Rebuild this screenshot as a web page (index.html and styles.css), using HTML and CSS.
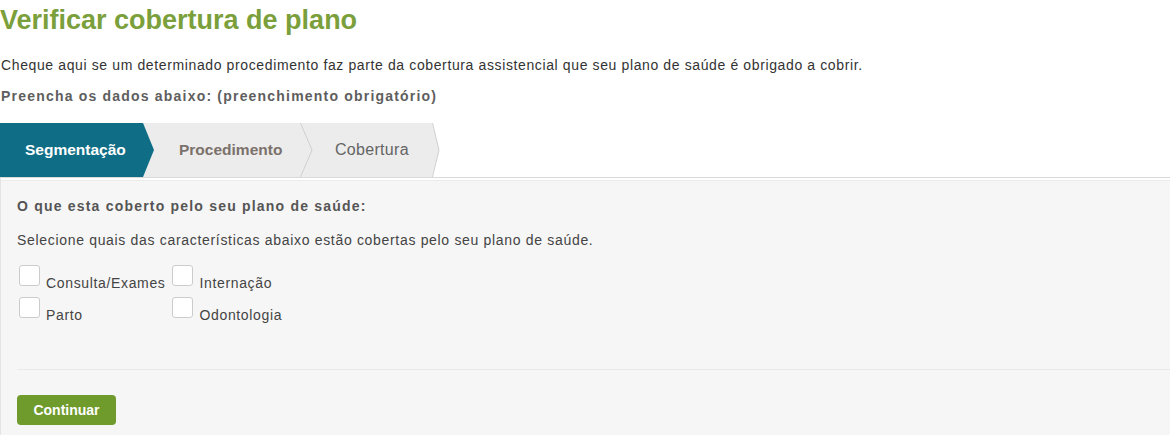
FILE: index.html
```html
<!DOCTYPE html>
<html lang="pt-BR">
<head>
<meta charset="utf-8">
<title>Verificar cobertura de plano</title>
<link rel="stylesheet" href="styles.css">
</head>
<body>
<main class="page">
  <h1 class="title">Verificar cobertura de plano</h1>
  <p class="intro">Cheque aqui se um determinado procedimento faz parte da cobertura assistencial que seu plano de saúde é obrigado a cobrir.</p>
  <p class="required">Preencha os dados abaixo: (preenchimento obrigatório)</p>

  <nav class="steps">
    <div class="step step-active">
      <span>Segmentação</span>
      <svg class="chev" viewBox="0 0 11 54" preserveAspectRatio="none"><path d="M0 0 L11 27 L0 54 Z" fill="#0f6e86"/></svg>
    </div>
    <div class="step step-two">
      <span>Procedimento</span>
      <svg class="chev chev-gray" viewBox="0 0 13 54" preserveAspectRatio="none"><path d="M0 0 L12 27 L0 54 Z" fill="#ececec"/><path d="M0.5 0 L12 27 L0.5 54" fill="none" stroke="#cfcfcf" stroke-width="1"/></svg>
    </div>
    <div class="step step-three">
      <span>Cobertura</span>
      <svg class="chev chev-gray chev-small" viewBox="0 0 8 54" preserveAspectRatio="none"><path d="M0 0 L7 27 L0 54 Z" fill="#ececec"/><path d="M0.5 0 L7 27 L0.5 54" fill="none" stroke="#cfcfcf" stroke-width="1"/></svg>
    </div>
  </nav>

  <section class="panel">
    <h2 class="panel-title">O que esta coberto pelo seu plano de saúde:</h2>
    <p class="panel-text">Selecione quais das características abaixo estão cobertas pelo seu plano de saúde.</p>
    <div class="options">
      <label class="option"><span class="box"></span><span class="option-text">Consulta/Exames</span></label>
      <label class="option"><span class="box"></span><span class="option-text">Internação</span></label>
      <label class="option"><span class="box"></span><span class="option-text">Parto</span></label>
      <label class="option"><span class="box"></span><span class="option-text">Odontologia</span></label>
    </div>
    <div class="actions">
      <button class="btn" type="button">Continuar</button>
    </div>
  </section>
</main>
</body>
</html>
```
FILE: styles.css
```css
html, body {
  margin: 0;
  padding: 0;
  background: #ffffff;
}
body {
  font-family: "Liberation Sans", Arial, sans-serif;
  color: #333333;
  overflow: hidden;
}
.page {
  width: 1170px;
}
.title {
  margin: 5px 0 0 0;
  font-size: 27px;
  line-height: 31px;
  font-weight: bold;
  color: #7a9f3b;
}
.intro {
  margin: 20px 0 0 1px;
  font-size: 14px;
  line-height: 18px;
  letter-spacing: 0.62px;
  color: #333333;
}
.required {
  margin: 13px 0 0 1px;
  font-size: 14px;
  line-height: 18px;
  font-weight: bold;
  letter-spacing: 1.2px;
  color: #5e5e5e;
}
.steps {
  display: flex;
  margin-top: 18px;
  height: 54px;
}
.step {
  position: relative;
  display: flex;
  align-items: center;
  height: 54px;
  box-sizing: border-box;
  font-size: 15.5px;
  font-weight: bold;
  background: #ececec;
  color: #7b716b;
}
.step-active {
  width: 143px;
  padding-left: 25px;
  background: #0f6e86;
  color: #ffffff;
  z-index: 3;
}
.step-two {
  width: 157px;
  padding-left: 36px;
  z-index: 2;
}
.step-three {
  width: 132px;
  padding-left: 35px;
  font-size: 16px;
  font-weight: normal;
  letter-spacing: 0.3px;
  color: #646464;
  z-index: 1;
}
.chev {
  position: absolute;
  top: 0;
  left: 100%;
  width: 11px;
  height: 54px;
}
.chev-gray {
  width: 13px;
}
.chev-small {
  width: 8px;
}
.panel {
  background: #f6f6f6;
  border-top: 1px solid #d9d9d9;
  border-left: 1px solid #e4e4e4;
  box-shadow: inset 0 2px 0 #ffffff, inset 0 3px 0 #ececec;
  padding: 19px 0 40px 16px;
  height: 300px;
  box-sizing: border-box;
}
.panel-title {
  margin: 0;
  font-size: 14px;
  line-height: 18px;
  font-weight: bold;
  letter-spacing: 1.2px;
  color: #555555;
}
.panel-text {
  margin: 16px 0 0 0;
  font-size: 14px;
  line-height: 18px;
  letter-spacing: 0.68px;
  color: #444444;
}
.options {
  display: grid;
  grid-template-columns: max-content max-content;
  row-gap: 6px;
  column-gap: 7px;
  margin-top: 16px;
  margin-left: 2px;
}
.option {
  display: flex;
  align-items: flex-start;
  font-size: 14px;
  line-height: 16px;
  letter-spacing: 0.65px;
  color: #444444;
}
.option-text {
  padding-top: 10px;
}
.box {
  width: 19px;
  height: 19px;
  border: 1px solid #cccccc;
  border-radius: 3px;
  background: #ffffff;
  margin-right: 6px;
}
.actions {
  margin-top: 46px;
  border-top: 1px solid #e9e9e9;
  padding-top: 25px;
}
.btn {
  font-family: "Liberation Sans", Arial, sans-serif;
  font-size: 14px;
  font-weight: bold;
  color: #ffffff;
  background: #6f9a2c;
  border: none;
  border-radius: 4px;
  width: 99px;
  height: 30px;
  padding: 0;
}
```
